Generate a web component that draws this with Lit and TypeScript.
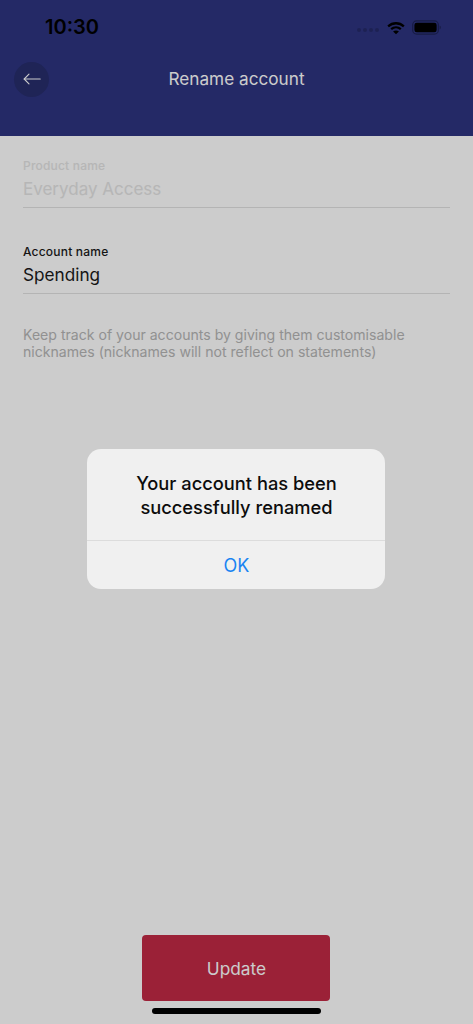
import { LitElement, html, css } from "lit";
import { customElement } from "lit/decorators.js";

@customElement("app-root")
export class AppRoot extends LitElement {
  static styles = css`
    :host {
      display: block;
      width: 473px;
      height: 1024px;
      position: relative;
      overflow: hidden;
      font-family: Inter, "Liberation Sans", sans-serif;
      background: #fff;
    }
    .page {
      height: 1024px;
      display: flex;
      flex-direction: column;
    }
    .header {
      height: 136px;
      background: #2d3480;
      flex: none;
      box-sizing: border-box;
      display: flex;
      flex-direction: column;
    }
    .status {
      height: 61px;
      box-sizing: border-box;
      padding: 16px 32px 0 45px;
      display: flex;
      justify-content: space-between;
      align-items: flex-start;
    }
    .time {
      font-size: 20px;
      line-height: 22px;
      font-weight: 600;
      color: #000;
    }
    .sys {
      display: flex;
      align-items: center;
      gap: 7px;
      padding-top: 4px;
    }
    .dots { display: flex; gap: 2px; margin-top: 5px; margin-right: 1px; }
    .dots i { width: 4px; height: 4px; border-radius: 50%; background: #252a68; display: block; }
    .nav {
      height: 36px;
      padding: 0 14px;
      display: flex;
      align-items: center;
    }
    .back {
      width: 35px;
      height: 35px;
      border-radius: 50%;
      background: #272d6c;
      display: flex;
      align-items: center;
      justify-content: center;
      flex: none;
    }
    .title {
      flex: 1;
      text-align: center;
      font-size: 17.2px;
      font-weight: 400;
      color: #fff;
      margin-right: 35px;
      line-height: 34px;
    }
    .form {
      flex: 1;
      padding: 23px 23px 0;
      display: flex;
      flex-direction: column;
    }
    .field { border-bottom: 1px solid #e2e2e2; height: 49px; box-sizing: border-box; }
    .field + .field { margin-top: 37px; }
    .label {
      font-size: 12px;
      line-height: 14px;
      font-weight: 500;
      color: #1a1a1a;
      letter-spacing: .2px;
    }
    .value {
      font-size: 17.2px;
      line-height: 24px;
      margin-top: 4px;
      color: #1a1a1a;
    }
    .disabled .label, .disabled .value { color: #e4e4e4; }
    .disabled .value { font-size: 17px; }
    .hint {
      margin: 32px 0 0;
      font-size: 14.08px;
      line-height: 17px;
      color: #b6b6b6;
    }
    .footer {
      height: 89px;
      display: flex;
      flex-direction: column;
      align-items: center;
      flex: none;
    }
    .update {
      width: 188px;
      height: 66px;
      box-sizing: border-box;
      padding-left: 1px;
      border-radius: 4px;
      background: #c22a45;
      color: #fff;
      font-size: 17.3px;
      display: flex;
      align-items: center;
      justify-content: center;
      margin-right: 1px;
    }
    .homebar {
      width: 169px;
      height: 6px;
      border-radius: 3px;
      background: #000;
      margin-top: 7px;
    }
    .overlay {
      position: absolute;
      inset: 0;
      background: rgba(0, 0, 0, .2);
      display: flex;
      align-items: flex-start;
      justify-content: center;
    }
    .dialog {
      margin-top: 449px;
      margin-right: 1px;
      width: 298px;
      height: 140px;
      border-radius: 14px;
      background: #f0f0f0;
      display: flex;
      flex-direction: column;
      box-sizing: border-box;
      padding-left: 1px;
    }
    .msg {
      height: 92px;
      box-sizing: border-box;
      border-bottom: 1px solid #dcdcdc;
      margin-left: -1px;
      padding-top: 22px;
      padding-left: 1px;
      text-align: center;
      font-size: 18.3px;
      line-height: 24px;
      font-weight: 500;
      color: #0c0c0c;
    }
    .ok {
      flex: 1;
      display: flex;
      align-items: center;
      justify-content: center;
      color: #1a84f2;
      font-size: 18px;
      font-weight: 400;
    }
  `;

  render() {
    return html`
      <div class="page">
        <div class="header">
          <div class="status">
            <span class="time">10:30</span>
            <div class="sys">
              <span class="dots"><i></i><i></i><i></i><i></i></span>
              <svg width="18" height="14" viewBox="0 0 19 14" fill="none" stroke="#000" stroke-width="2.4">
                <path d="M1.2 5.2 C6 .9 13 .9 17.8 5.2" />
                <path d="M4.4 8.2 C7.4 5.7 11.6 5.7 14.6 8.2" />
                <path d="M9.5 13.6 L6.4 10.6 C8.2 9.3 10.8 9.3 12.6 10.6 Z" fill="#000" stroke="none" />
              </svg>
              <svg width="29" height="15" viewBox="0 0 30 15">
                <rect x=".75" y=".75" width="26.5" height="13.5" rx="4" fill="none" stroke="#1e2356" stroke-width="1.3" />
                <rect x="2.5" y="2.5" width="23" height="10" rx="2.4" fill="#000" />
                <path d="M28.6 5.5 C29.5 6 29.8 6.7 29.8 7.5 C29.8 8.3 29.5 9 28.6 9.5 Z" fill="#1e2356" />
              </svg>
            </div>
          </div>
          <div class="nav">
            <div class="back">
              <svg width="18" height="12" viewBox="0 0 18 12" fill="none" stroke="#fff" stroke-width="1.1" stroke-linecap="round" stroke-linejoin="round">
                <path d="M1.2 6 H17.2" />
                <path d="M6 1.2 L1.2 6 L6 10.8" />
              </svg>
            </div>
            <div class="title">Rename account</div>
          </div>
        </div>
        <div class="form">
          <div class="field disabled">
            <div class="label">Product name</div>
            <div class="value">Everyday Access</div>
          </div>
          <div class="field">
            <div class="label">Account name</div>
            <div class="value">Spending</div>
          </div>
          <p class="hint">Keep track of your accounts by giving them customisable<br />nicknames (nicknames will not reflect on statements)</p>
        </div>
        <div class="footer">
          <div class="update">Update</div>
          <div class="homebar"></div>
        </div>
      </div>
      <div class="overlay">
        <div class="dialog">
          <div class="msg">Your account has been<br />successfully renamed</div>
          <div class="ok">OK</div>
        </div>
      </div>
    `;
  }
}
